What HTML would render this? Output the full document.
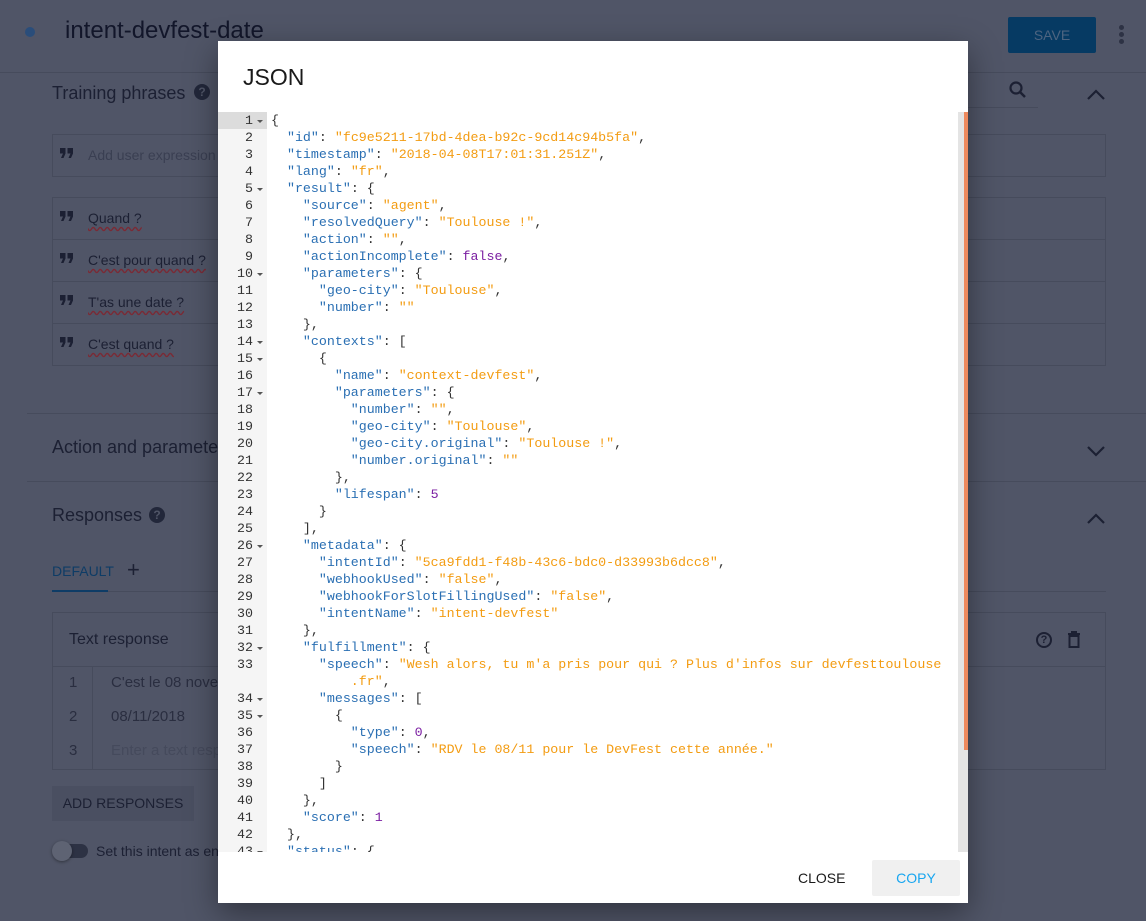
<!DOCTYPE html>
<html><head><meta charset="utf-8"><style>
*{box-sizing:border-box;margin:0;padding:0}
body{width:1146px;height:921px;overflow:hidden;background:#505567;font-family:"Liberation Sans",sans-serif;position:relative;color:#1c2033}
.a{position:absolute}
.line{position:absolute;height:1px;background:#464b5c}
.box{position:absolute;border:1px solid #464b5c}
.ph{position:absolute;left:88px;font-size:14px;color:#1c2033;text-decoration:underline wavy #7a2a35;text-underline-offset:3px}
.q{position:absolute;left:60px}
.modal{position:absolute;left:218px;top:41px;width:750px;height:862px;background:#fff;box-shadow:0 10px 30px rgba(0,0,0,.4)}
.code{position:absolute;left:0;top:71px;width:750px;height:740px;overflow:hidden;font-family:"Liberation Mono",monospace;font-size:13.3px;line-height:17px}
.gut{position:absolute;left:0;top:0;width:49px;height:740px;background:#f5f5f5}
.ln{position:absolute;left:0;width:49px;height:17px;color:#333;text-align:right;padding-right:14px}
.ln.f:after{content:"";position:absolute;right:4px;top:8px;border-left:3px solid transparent;border-right:3px solid transparent;border-top:3px solid #555}
.t{position:absolute;left:53px;white-space:pre;color:#333}
.k{color:#2a6fb3}.s{color:#f39c12}.n{color:#7b1fa2}
</style></head><body>
<div class="a" style="left:25px;top:27px;width:10px;height:10px;border-radius:50%;background:#2a4d7a"></div>
<div class="a" style="left:65px;top:17px;font-size:24px;color:#12162a">intent-devfest-date</div>
<div class="a" style="left:1008px;top:17px;width:88px;height:36px;background:#063a63;border-radius:2px;color:#4d6480;font-size:14px;text-align:center;line-height:36px">SAVE</div>
<div class="a" style="left:1119px;top:25px;width:5px;height:5px;border-radius:50%;background:#2d3244;box-shadow:0 7px 0 #2d3244,0 14px 0 #2d3244"></div>
<div class="line" style="left:0;top:72px;width:1146px"></div>
<div class="a" style="left:52px;top:83px;font-size:18px">Training phrases</div>
<div class="a" style="left:194px;top:84px;width:16px;height:16px;border-radius:50%;background:#22273a;color:#505567;font-size:12px;font-weight:bold;text-align:center;line-height:16px">?</div>
<svg class="a" style="left:1008px;top:80px" width="20" height="20"><circle cx="8" cy="8" r="5.5" fill="none" stroke="#1c2033" stroke-width="2.2"/><path d="M12 12l5 5" stroke="#1c2033" stroke-width="2.5"/></svg>
<div class="line" style="left:968px;top:107px;width:70px"></div>
<svg class="a" style="left:1086px;top:88px" width="20" height="14"><path d="M2 11l8-8 8 8" fill="none" stroke="#1c2033" stroke-width="2.2"/></svg>
<div class="box" style="left:52px;top:134px;width:1054px;height:43px"></div>
<div class="a" style="left:88px;top:147px;font-size:14px;color:#3a3f52">Add user expression</div>
<div class="box" style="left:52px;top:197px;width:1054px;height:169px"></div>
<div class="line" style="left:52px;top:239px;width:1054px"></div>
<div class="line" style="left:52px;top:281px;width:1054px"></div>
<div class="line" style="left:52px;top:323px;width:1054px"></div>
<div class="ph" style="top:210px">Quand ?</div>
<div class="ph" style="top:252px">C'est pour quand ?</div>
<div class="ph" style="top:294px">T'as une date ?</div>
<div class="ph" style="top:336px">C'est quand ?</div>
<div id="Q"></div>
<div class="line" style="left:27px;top:413px;width:1119px"></div>
<div class="a" style="left:52px;top:437px;font-size:18px">Action and parameters</div>
<svg class="a" style="left:1086px;top:444px" width="20" height="14"><path d="M2 3l8 8 8-8" fill="none" stroke="#1c2033" stroke-width="2.2"/></svg>
<div class="line" style="left:27px;top:481px;width:1119px"></div>
<div class="a" style="left:52px;top:505px;font-size:18px">Responses</div>
<div class="a" style="left:149px;top:507px;width:16px;height:16px;border-radius:50%;background:#22273a;color:#505567;font-size:12px;font-weight:bold;text-align:center;line-height:16px">?</div>
<svg class="a" style="left:1086px;top:512px" width="20" height="14"><path d="M2 11l8-8 8 8" fill="none" stroke="#1c2033" stroke-width="2.2"/></svg>
<div class="a" style="left:52px;top:563px;font-size:14px;color:#0e3c66">DEFAULT</div>
<div class="a" style="left:127px;top:557px;font-size:22px;color:#1c2033">+</div>
<div class="line" style="left:52px;top:591px;width:1054px"></div>
<div class="a" style="left:52px;top:590px;width:56px;height:2px;background:#0e3c66"></div>
<div class="box" style="left:52px;top:612px;width:1054px;height:158px"></div>
<div class="a" style="left:69px;top:631px;font-size:16px">Text response</div>
<div class="line" style="left:52px;top:666px;width:1054px"></div>
<div class="line" style="left:92px;top:666px;width:1px;height:104px;position:absolute"></div>
<div class="a" style="left:69px;top:674px;font-size:15px;color:#2a2e40">1</div><div class="a" style="left:111px;top:674px;font-size:15px;color:#2a2e40">C'est le 08 novembre</div>
<div class="a" style="left:69px;top:708px;font-size:15px;color:#2a2e40">2</div><div class="a" style="left:111px;top:708px;font-size:15px;color:#2a2e40">08/11/2018</div>
<div class="a" style="left:69px;top:742px;font-size:15px;color:#2a2e40">3</div><div class="a" style="left:111px;top:742px;font-size:15px;color:#454a5c">Enter a text response</div>
<div class="a" style="left:1036px;top:632px;width:16px;height:16px;border-radius:50%;border:2px solid #1c2033;font-size:11px;font-weight:bold;text-align:center;line-height:12px">?</div>
<svg class="a" style="left:1066px;top:631px" width="16" height="18"><path d="M2 3h12M6 3V1h4v2M3.5 5h9v11h-9z" fill="none" stroke="#1c2033" stroke-width="2"/></svg>
<div class="a" style="left:52px;top:786px;width:142px;height:35px;background:#4a4f61;font-size:14px;line-height:35px;text-align:center">ADD RESPONSES</div>
<div class="a" style="left:56px;top:844px;width:32px;height:14px;border-radius:7px;background:#2d3244"></div>
<div class="a" style="left:52px;top:841px;width:20px;height:20px;border-radius:50%;background:#5e6373;box-shadow:0 1px 3px rgba(0,0,0,.4)"></div>
<div class="a" style="left:96px;top:843px;font-size:14px;color:#1c2033">Set this intent as end of conversation</div>

<div class="modal">
<div class="a" style="left:25px;top:23px;font-size:23px;color:#1a1a1a">JSON</div>
<div class="code">
<div class="gut"></div>
<div class="a" style="left:0;top:0;width:49px;height:17px;background:#dcdcdc"></div>
<div class="a" style="left:740px;top:0;width:10px;height:740px;background:#e4e4e4"></div>
<div class="a" style="left:746px;top:0;width:4px;height:638px;background:#ee8a5e"></div>
<div id="L"></div>
</div>
<div class="a" style="left:580px;top:829px;font-size:14px;color:#1a1a1a">CLOSE</div>
<div class="a" style="left:654px;top:819px;width:88px;height:36px;background:#f0f0f0;border-radius:2px;color:#18a6f0;font-size:14px;text-align:center;line-height:36px">COPY</div>
</div>
<script>
var qs='';[148,211,253,295,337].forEach(function(t){qs+='<svg class="q" style="top:'+t+'px" width="14" height="11"><path d="M0 0h5.5v5.5L3.5 10H1l2-4.5H0zM7.5 0H13v5.5L11 10H8.5l2-4.5H7.5z" fill="#1c2033"/></svg>'});
document.getElementById('Q').innerHTML=qs;
var K=function(x){return '<span class="k">"'+x+'"</span>: '},S=function(x){return '<span class="s">"'+x+'"</span>'},N=function(x){return '<span class="n">'+x+'</span>'};
var lines=[
[0,'{',1],[1,K('id')+S('fc9e5211-17bd-4dea-b92c-9cd14c94b5fa')+','],[1,K('timestamp')+S('2018-04-08T17:01:31.251Z')+','],[1,K('lang')+S('fr')+','],
[1,K('result')+'{',1],[2,K('source')+S('agent')+','],[2,K('resolvedQuery')+S('Toulouse !')+','],[2,K('action')+S('')+','],[2,K('actionIncomplete')+N('false')+','],
[2,K('parameters')+'{',1],[3,K('geo-city')+S('Toulouse')+','],[3,K('number')+S('')],[2,'},'],[2,K('contexts')+'[',1],[3,'{',1],
[4,K('name')+S('context-devfest')+','],[4,K('parameters')+'{',1],[5,K('number')+S('')+','],[5,K('geo-city')+S('Toulouse')+','],[5,K('geo-city.original')+S('Toulouse !')+','],[5,K('number.original')+S('')],
[4,'},'],[4,K('lifespan')+N('5')],[3,'}'],[2,'],'],[2,K('metadata')+'{',1],[3,K('intentId')+S('5ca9fdd1-f48b-43c6-bdc0-d33993b6dcc8')+','],[3,K('webhookUsed')+S('false')+','],[3,K('webhookForSlotFillingUsed')+S('false')+','],[3,K('intentName')+S('intent-devfest')],
[2,'},'],[2,K('fulfillment')+'{',1],[3,K('speech')+'<span class="s">"Wesh alors, tu m\'a pris pour qui ? Plus d\'infos sur devfesttoulouse</span>',0,1],
[3,K('messages')+'[',1],[4,'{',1],[5,K('type')+N('0')+','],[5,K('speech')+S('RDV le 08/11 pour le DevFest cette année.')],[4,'}'],[3,']'],[2,'},'],[2,K('score')+N('1')],[1,'},'],[1,K('status')+'{',1]];
var h='',y=0,n=1;
lines.forEach(function(l){
 h+='<div class="ln'+(l[2]?' f':'')+'" style="top:'+y+'px">'+n+'</div>';
 h+='<div class="t" style="top:'+y+'px">'+'  '.repeat(l[0])+l[1]+'</div>';
 y+=17;
 if(l[3]){h+='<div class="t" style="top:'+y+'px">          <span class="s">.fr"</span>,</div>';y+=17;}
 n++;
});
document.getElementById('L').innerHTML=h;
</script>
</body></html>
